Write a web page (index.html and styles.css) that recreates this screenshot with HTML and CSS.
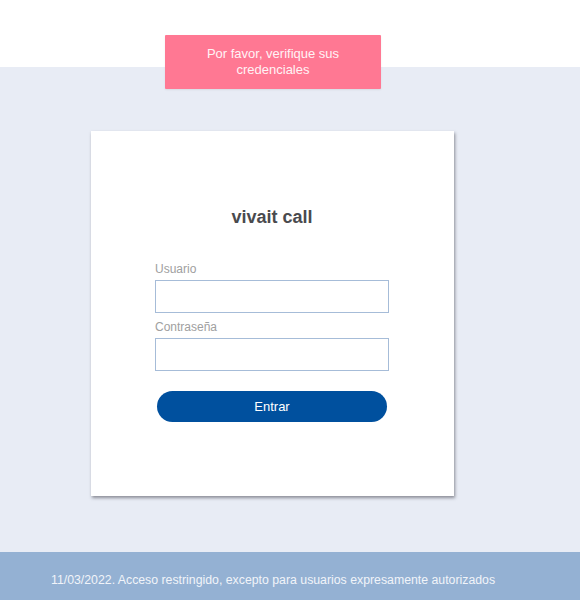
FILE: index.html
```html
<!DOCTYPE html>
<html lang="es">
<head>
<meta charset="utf-8">
<title>vivait call</title>
<link rel="stylesheet" href="styles.css">
</head>
<body>
<div class="top"></div>
<div class="toast">Por favor, verifique sus<br>credenciales</div>
<main class="main">
  <form class="card">
    <h1 class="title">vivait call</h1>
    <label class="label" for="u">Usuario</label>
    <input class="input" id="u" type="text">
    <label class="label label-2" for="p">Contraseña</label>
    <input class="input" id="p" type="password">
    <button class="btn" type="button">Entrar</button>
  </form>
</main>
<footer class="footer"><span class="footer-text">11/03/2022. Acceso restringido, excepto para usuarios expresamente autorizados</span></footer>
</body>
</html>
```

FILE: styles.css
```css
html, body {
  margin: 0;
  padding: 0;
}
body {
  font-family: "Liberation Sans", Arial, sans-serif;
  background: #ffffff;
  width: 580px;
  height: 600px;
  overflow: hidden;
  position: relative;
}
.top {
  height: 67px;
  background: #ffffff;
}
.toast {
  position: absolute;
  left: 165px;
  top: 35px;
  width: 216px;
  height: 54px;
  box-sizing: border-box;
  background: #ff7893;
  color: #fff3f6;
  font-size: 13px;
  line-height: 16px;
  text-align: center;
  padding-top: 11px;
  border-radius: 1px;
  box-shadow: 0 1px 2px rgba(0,0,0,0.08);
}
.main {
  height: 485px;
  background: #e8ecf5;
  box-sizing: border-box;
  padding-top: 64px;
  padding-left: 91px;
}
.card {
  width: 363px;
  height: 365px;
  box-sizing: border-box;
  background: #ffffff;
  padding: 76px 65px 0 64px;
  display: flex;
  flex-direction: column;
  box-shadow: 1px 2px 3px rgba(50,50,60,0.5);
}
.title {
  margin: 0 0 34px 0;
  font-size: 18px;
  line-height: 21px;
  font-weight: bold;
  color: #4a4a4e;
  text-align: center;
}
.label {
  font-size: 12px;
  line-height: 14px;
  color: #a0a0a0;
  margin-bottom: 4px;
}
.label-2 {
  margin-top: 7px;
}
.input {
  width: 234px;
  height: 33px;
  box-sizing: border-box;
  margin: 0;
  border: 1px solid #a6bcd8;
  border-radius: 0;
  background: #ffffff;
  outline: none;
}
.btn {
  margin: 20px 2px 0 2px;
  width: 230px;
  height: 31px;
  border: none;
  border-radius: 16px;
  background: #00509e;
  color: #ffffff;
  font-family: "Liberation Sans", Arial, sans-serif;
  font-size: 13px;
  cursor: pointer;
}
.footer {
  height: 48px;
  background: #94b1d3;
  color: #f1f4f9;
  box-sizing: border-box;
  padding-left: 51px;
  display: flex;
  align-items: center;
  padding-top: 8px;
}
.footer-text {
  font-size: 12.3px;
  line-height: 16px;
}
```
